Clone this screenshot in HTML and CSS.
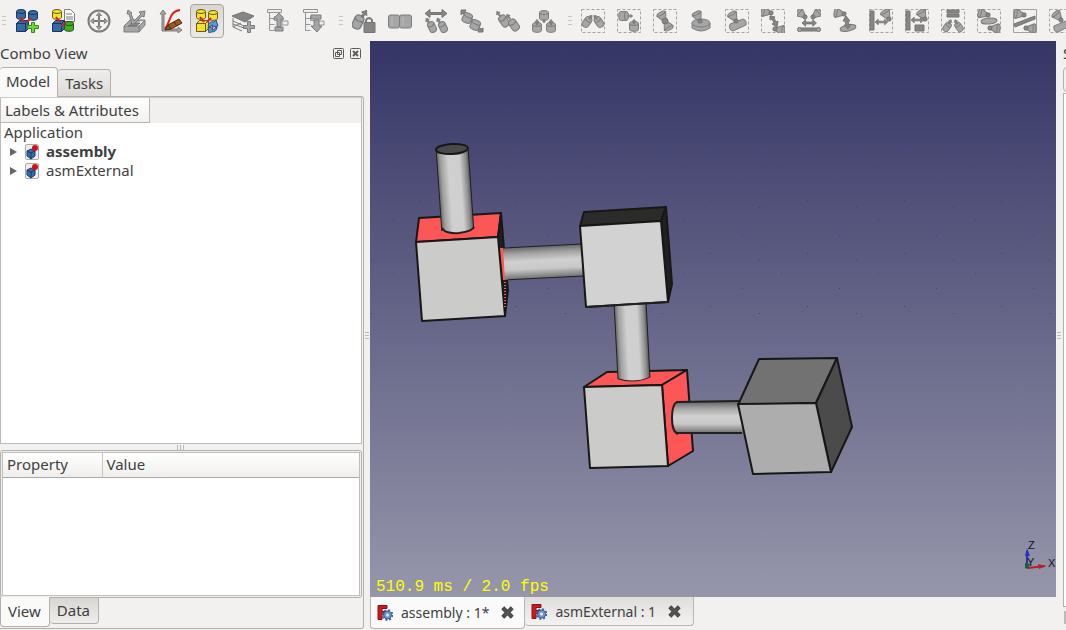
FILE: index.html
```html
<!DOCTYPE html>
<html lang="en">
<head>
<meta charset="utf-8">
<title>Assembly</title>
<link rel="stylesheet" href="styles.css">
</head>
<body>
<svg class="defs" aria-hidden="true">
  <defs>
    <g id="cyl"><path d="M.5 2.500v6c0 2.400 9 2.400 9 0v-6"/><ellipse cx="5" cy="2.500" rx="4.500" ry="2"/></g>
    <g id="cube"><path d="M.5 3.500h9v8h-9zM.5 3.500l3-3h9l-3 3zM9.500 3.500l3-3v8l-3 3z"/></g>
    <g id="cone"><path d="M-1 0L-5-8Q0-10 5-8L1 0z"/><ellipse cx="0" cy="-8.500" rx="4.500" ry="1.500"/><circle class="dark" r="2"/></g>
    <g id="up"><path class="dark" d="M-1 0v-4h-2l3-4 3 4h-2v4z"/></g>
    <g id="wide"><path class="dark" d="M0 0l4-3.500v2.500h8v-2.500l4 3.500-4 3.500v-2.500h-8v2.500z"/></g>
    <g id="pill"><rect x="-3.500" y="-5.500" width="7" height="11" rx="3"/><path d="M-3.500-2q3.500 2.500 7 0"/></g>
    <g id="dash"><rect class="dash" x=".5" y=".5" width="23" height="23"/></g>
    <g id="tree"><path class="pale" d="M.5.500h14v3h-14zM2.500 3.500v18h5M2.500 9.500h5M2.500 15.500h5M7.500 7.500h8v4h-8z"/></g>
    <linearGradient id="sky" x1="0" y1="0" x2="0" y2="1"><stop offset="0" stop-color="#353566"/><stop offset="1" stop-color="#9696ab"/></linearGradient>
    <linearGradient id="tubeV"><stop offset="0" stop-color="#666"/><stop offset=".12" stop-color="#a0a0a0"/><stop offset=".35" stop-color="#d0d0d0"/><stop offset=".7" stop-color="#cfcfcf"/><stop offset=".9" stop-color="#8c8c8c"/><stop offset="1" stop-color="#555"/></linearGradient>
    <linearGradient id="tubeH" x1="0" y1="0" x2="0" y2="1"><stop offset="0" stop-color="#666"/><stop offset=".2" stop-color="#a2a2a2"/><stop offset=".45" stop-color="#d0d0d0"/><stop offset=".7" stop-color="#c9c9c9"/><stop offset="1" stop-color="#707070"/></linearGradient>
    <pattern id="grain" width="97" height="53" patternUnits="userSpaceOnUse"><path fill="#3838b4" d="M5 8h1v1h-1zM63 23h1v1h-1zM31 41h1v1h-1zM80 48h1v1h-1z"/></pattern>
    <symbol id="doc" viewBox="0 0 16 16"><rect x="1.500" y=".5" width="13" height="15" rx="1.500" fill="#eee" stroke="#aaa"/><path d="M3 7l4-2 4 2v5l-4 3-4-3z" fill="#376ba8" stroke="#173c70"/><path d="M3 7l4 2 4-2M7 9v6" stroke="#17396a" fill="none"/><circle cx="11" cy="4" r="3" fill="#cc1212"/></symbol>
    <symbol id="logo" viewBox="0 0 16 16"><path d="M1 1h9v3h-5v3h4v3h-4v5h-4z" fill="#c91d1d" stroke="#8d1010"/><circle cx="10.500" cy="10.500" r="4" fill="#6c96cf" stroke="#345f9d"/><circle cx="10.500" cy="10.500" r="5" fill="none" stroke="#345f9d" stroke-width="1.500" stroke-dasharray="2 1.930"/><circle cx="10.500" cy="10.500" r="1.500" fill="#eee"/></symbol>
    <symbol id="close" viewBox="0 0 12 12"><path d="M1 3l2-2 3 3 3-3 2 2-3 3 3 3-2 2-3-3-3 3-2-2 3-3z" fill="#555" stroke="#444"/></symbol>
  </defs>
</svg>

<header class="toolbar">
  <span class="grip"></span>
  <button class="tool" aria-label="Add part"><svg class="ic" viewBox="0 0 24 24"><g class="blue"><use href="#cyl" x="1" y="0"/><use href="#cyl" x="13" y="1"/><use href="#cube" x="1" y="11"/></g><path class="red" d="M5 8l4 5M16 9l-4 4"/><path class="green" d="M16.500 13.500h3v3h4v3h-4v4h-3v-4h-4v-3h4z"/></svg></button>
  <button class="tool" aria-label="New assembly"><svg class="ic" viewBox="0 0 24 24"><g class="yellow"><use href="#cyl" x="1" y="0"/></g><path class="page" d="M13.500.500h6l4 4v8h-10z"/><path d="M15 5h6M15 8h7M15 10h7"/><g class="blue"><use href="#cube" x="1" y="11"/></g><g class="leaf"><use href="#cyl" x="13" y="12"/></g><path class="red" d="M5 8l4 5M15 14l-5 3"/></svg></button>
  <button class="tool" aria-label="Move part"><svg class="ic" viewBox="0 0 24 24"><circle cx="12" cy="12" r="10.500" fill="none" stroke-width="2"/><path d="M11.500 11.500v-5h-2l2.500-3 2.500 3h-2v5h5v-2l3 2.500-3 2.500v-2h-5v5h2l-2.500 3-2.500-3h2v-5h-5v2l-3-2.500 3-2.500v2z"/></svg></button>
  <button class="tool" aria-label="Move on plane"><svg class="ic" viewBox="0 0 24 24"><path d="M1 17l6-6h15v5l-6 7H1zM1 17h15l6-6M16 17v6"/><path class="dark" d="M5 17h8l4-3H9z"/><path d="M9 15L6 5H4l1-4 4 3-1 1 3 7 7-7-2-2 6-1-1 6-2-1-8 8z"/></svg></button>
  <button class="tool" aria-label="Trace"><svg class="ic" viewBox="0 0 24 24"><path d="M3 22V5H1l3-4 3 4H5v15h14v-2l4 3-4 3v-2z"/><path class="curve" d="M6 20C12 13 9 3 21 1"/><path class="brown" d="M6 21l3-5 11-6 3 4-11 6z"/><path class="brown" d="M9 16l3 4M15 13l3 4"/></svg></button>
  <button class="tool on" aria-label="Auto recompute"><svg class="ic" viewBox="0 0 24 24"><g class="yellow"><use href="#cyl" x="1" y="0"/><use href="#cyl" x="13" y="1"/><use href="#cube" x="1" y="11"/></g><path class="red" d="M5 8l4 5M16 9l-4 4"/><path class="sync" d="M13 17q1-5 6-4l2-2 2 6-6 1 1-2q-3 0-3 2zM22 18q0 5-6 5l-2 1-1-6 5 1-1 2q3 0 3-2z"/></svg></button>
  <button class="tool" aria-label="Add workplane"><svg class="ic" viewBox="0 0 24 24"><path class="dark" d="M1 7l11-4 11 4-9 6z"/><path class="line" d="M2 9v9l9 4M2 12l11 5M2 15l11 4M2 18l8-4"/><path d="M16.500 12.500h3v4h4v3h-4v4h-3v-4h-4v-3h4z"/></svg></button>
  <button class="tool" aria-label="Move item up"><svg class="ic" viewBox="0 0 24 24"><use href="#tree"/><path class="pale" d="M15 12h6v4h-6z"/><path d="M8 18h8v4H8zM10 18v-8H6l6-6 5 6h-3v8z"/></svg></button>
  <button class="tool" aria-label="Move item down"><svg class="ic" viewBox="0 0 24 24"><use href="#tree"/><path class="pale" d="M15 12h6v4h-6z"/><path d="M8 6h10v4H8zM11 11h5v6h3l-5 6-6-6h3z"/></svg></button>
  <span class="grip"></span>
  <button class="tool" aria-label="Lock"><svg class="ic" viewBox="0 0 24 24"><use href="#pill" transform="translate(6 13) rotate(25) scale(1.300)"/><use href="#up" transform="translate(10 8) rotate(35)"/><path class="line wide" d="M14 14v-3q3-4 6 0v3"/><rect class="dark" x="12" y="13.500" width="11" height="10"/></svg></button>
  <button class="tool" aria-label="Plane coincident"><svg class="ic" viewBox="0 0 24 24"><rect x=".5" y="6" width="11" height="13" rx="2"/><rect x="11.500" y="6" width="12" height="13" rx="2"/><path class="shine" d="M4 8v9M15 8v9"/></svg></button>
  <button class="tool" aria-label="Plane distance"><svg class="ic" viewBox="0 0 24 24"><path class="dark" d="M1 4.500l5-4v3h12v-3l5 4-5 4v-3H6v3z"/><use href="#pill" transform="translate(8 18) rotate(-25)"/><use href="#pill" transform="translate(19 18) rotate(-25)"/><use href="#up" transform="translate(5 14) rotate(-30) scale(.7)"/><use href="#up" transform="translate(16 14) rotate(-30) scale(.7)"/></svg></button>
  <button class="tool" aria-label="Axial alignment"><svg class="ic" viewBox="0 0 24 24"><path class="dark" d="M1 1h5L5 3l16 17 2-1v4h-5l1-2L3 4 1 6z"/><use href="#cyl" transform="translate(5 2) rotate(25)"/><use href="#cyl" transform="translate(13 9) rotate(25)"/></svg></button>
  <button class="tool" aria-label="Same orientation"><svg class="ic" viewBox="0 0 24 24"><use href="#pill" transform="translate(8 12) rotate(-35) scale(1.100)"/><use href="#pill" transform="translate(18 16) rotate(-35) scale(1.100)"/><use href="#up" transform="translate(4 7) rotate(-35) scale(.7)"/><use href="#up" transform="translate(14 10) rotate(-35) scale(.7)"/></svg></button>
  <button class="tool" aria-label="Multi parallel"><svg class="ic" viewBox="0 0 24 24"><use href="#cyl" x="7" y="1"/><use href="#cyl" x="0" y="13"/><use href="#cyl" x="14" y="13"/><use href="#up" transform="translate(5 16) scale(.7)"/><use href="#up" transform="translate(19 16) scale(.7)"/><use href="#up" transform="translate(12 10) rotate(180) scale(.5)"/></svg></button>
  <span class="grip"></span>
  <button class="tool" aria-label="Angle"><svg class="ic" viewBox="0 0 24 24"><use href="#dash"/><use href="#pill" transform="translate(6 13) rotate(35)"/><use href="#pill" transform="translate(18 13) rotate(-35)"/><use href="#up" transform="translate(8 10) rotate(40) scale(.6)"/><use href="#up" transform="translate(16 10) rotate(-40) scale(.6)"/></svg></button>
  <button class="tool" aria-label="Perpendicular"><svg class="ic" viewBox="0 0 24 24"><use href="#dash"/><use href="#cyl" transform="translate(12 2) rotate(90)"/><use href="#cyl" x="12" y="12"/><use href="#up" transform="translate(11 7) rotate(90) scale(.6)"/><use href="#up" transform="translate(17 15) scale(.6)"/></svg></button>
  <button class="tool" aria-label="Points coincident"><svg class="ic" viewBox="0 0 24 24"><use href="#dash"/><use href="#cone" transform="translate(12 12) rotate(-28)"/><use href="#cone" transform="translate(12 12) rotate(152)"/><circle class="dark" cx="12" cy="12" r="3"/></svg></button>
  <button class="tool" aria-label="Point in plane"><svg class="ic" viewBox="0 0 24 24"><path d="M3 14v5q9 6 18 0v-5"/><ellipse cx="12" cy="14" rx="9" ry="4"/><use href="#cone" transform="translate(11 12) rotate(-25)"/></svg></button>
  <button class="tool" aria-label="Point on line"><svg class="ic" viewBox="0 0 24 24"><use href="#dash"/><path d="M5 15l13-5q4 1 3 6l-13 6q-5-1-3-7z"/><use href="#cone" transform="translate(11 12) rotate(-30)"/></svg></button>
  <button class="tool" aria-label="Point distance"><svg class="ic" viewBox="0 0 24 24"><use href="#dash"/><use href="#cone" transform="translate(10 4) rotate(-80)"/><use href="#cone" transform="translate(14 20) rotate(100)"/><path class="dark" d="M9 7l5 1-1 1 2 4 2-1-1 6-5-3 2-1-2-4-2 1z"/></svg></button>
  <button class="tool" aria-label="Points distance"><svg class="ic" viewBox="0 0 24 24"><use href="#cone" transform="translate(8 8) rotate(-50)"/><use href="#cone" transform="translate(16 8) rotate(50)"/><use href="#wide" transform="translate(5 14) scale(.9)"/><path class="dark" d="M1 19h22v3H1z"/><circle cx="2.500" cy="20.500" r="2"/><circle cx="21.500" cy="20.500" r="2"/></svg></button>
  <button class="tool" aria-label="Point plane distance"><svg class="ic" viewBox="0 0 24 24"><use href="#cone" transform="translate(11 5) rotate(-80)"/><ellipse cx="15" cy="19" rx="8" ry="3" transform="rotate(-12 15 19)"/><path class="dark" d="M13 7l4 5h-2l1 4 2-1-3 5-4-4h2l-1-4h-2z"/></svg></button>
  <button class="tool" aria-label="Horizontal distance"><svg class="ic" viewBox="0 0 24 24"><use href="#dash"/><path class="dark" d="M1 2h4v19H1z"/><use href="#cone" transform="translate(20 10) rotate(-30)"/><use href="#wide" transform="translate(6 13) scale(.8)"/></svg></button>
  <button class="tool" aria-label="Vertical distance"><svg class="ic" viewBox="0 0 24 24"><use href="#dash"/><path class="dark" d="M1 2h4v19H1zM10 16h9v6h-9z"/><use href="#cone" transform="translate(20 10) rotate(-30)"/><use href="#wide" transform="translate(6 11) scale(.8)"/></svg></button>
  <button class="tool" aria-label="Symmetric"><svg class="ic" viewBox="0 0 24 24"><use href="#dash"/><path class="dark" d="M6 1h12v3H6zM6 5h12v3H6z"/><use href="#pill" transform="translate(6 18) rotate(35) scale(.9)"/><use href="#pill" transform="translate(18 18) rotate(-35) scale(.9)"/><use href="#up" transform="translate(8 15) rotate(25) scale(.6)"/><use href="#up" transform="translate(16 15) rotate(-25) scale(.6)"/></svg></button>
  <button class="tool" aria-label="Equal"><svg class="ic" viewBox="0 0 24 24"><use href="#dash"/><use href="#cone" transform="translate(11 6) rotate(-75)"/><ellipse cx="12" cy="12" rx="8" ry="3" transform="rotate(-5 12 12)"/><use href="#cone" transform="translate(13 19) rotate(95)"/></svg></button>
  <button class="tool" aria-label="Points symmetric"><svg class="ic" viewBox="0 0 24 24"><rect class="box" x=".5" y=".5" width="23" height="23"/><use href="#cone" transform="translate(11 6) rotate(-80)"/><use href="#cone" transform="translate(13 19) rotate(95)"/><path class="dark" d="M1 15l21-8v3L2 18z"/></svg></button>
  <button class="tool" aria-label="Tangent"><svg class="ic" viewBox="0 0 24 24"><use href="#dash"/><path d="M5 17l12-5 4 5-12 6q-5 0-4-6z"/><use href="#cone" transform="translate(12 11) rotate(-40)"/></svg></button>
</header>

<main class="work">
  <aside class="dock">
    <div class="dock-title"><h2>Combo View</h2>
      <button class="mini" aria-label="Float"><svg viewBox="0 0 11 11"><rect x=".5" y=".5" width="10" height="10" rx="1"/><path d="M4.500 2.500h4v4h-4zM2.500 4.500h4v4h-4z"/></svg></button>
      <button class="mini" aria-label="Close"><svg viewBox="0 0 11 11"><rect x=".5" y=".5" width="10" height="10" rx="1"/><path class="x" d="M3 3l5 5M8 3L3 8"/></svg></button>
    </div>
    <div class="tabs top"><button class="tab current">Model</button><button class="tab">Tasks</button></div>
    <div class="pane">
      <section class="model">
        <div class="tree-head"><span>Labels &amp; Attributes</span></div>
        <div class="root">Application</div>
        <ul class="nodes">
          <li><button class="node bold"><i class="twist"></i><svg><use href="#doc"/></svg>assembly</button></li>
          <li><button class="node"><i class="twist"></i><svg><use href="#doc"/></svg>asmExternal</button></li>
        </ul>
      </section>
      <div class="split"></div>
      <section class="props">
        <div class="grid"><table><thead><tr><th class="name">Property</th><th>Value</th></tr></thead></table></div>
      </section>
      <div class="tabs bottom"><button class="tab current">View</button><button class="tab">Data</button></div>
    </div>
  </aside>
  <div class="split side"></div>

  <section class="center">
    <div class="view">
      <svg class="scene" viewBox="370 41 686 556" preserveAspectRatio="none" role="img" aria-label="3D view">
        <rect x="370" y="41" width="686" height="556" fill="url(#sky)"/>
        <rect x="370" y="41" width="686" height="275" fill="url(#grain)"/>
        <g class="edge">
          <path class="hot" d="M419 218L501 213L498 237L416 242z"/>
          <path class="black" d="M501 213L504 249L508 290L505 316L498 237z"/>
          <path class="face" d="M416 242L498 237L505 316L422 321z"/>
          <g transform="rotate(-3 543 262)"><rect class="flat" x="503" y="246" width="80" height="32" fill="url(#tubeH)"/><path class="line" d="M503 246h80M507 278h76"/></g>
          <path class="flat hot" d="M500 248l3 0 2 32-2 0z"/><path class="hatch" d="M505 282v25"/>
          <g transform="rotate(-4 456 190)"><path class="flat" fill="url(#tubeV)" d="M439 149H471V230Q455 236 439 230z"/><path class="line" d="M439 151V230M471 151V230"/></g>
          <path class="line" d="M442 228Q445 234 459 233Q473 231 474 227"/>
          <ellipse cx="452" cy="149" rx="16" ry="5" fill="#494949" transform="rotate(-3 452 149)"/>
          <path class="dim" d="M584 212L666 207L661 221L580 226z"/>
          <path class="black" d="M666 207L672 284L668 302L661 221z"/>
          <path class="face light" d="M580 226L661 221L668 302L586 307z"/>

          <path class="hot" d="M607 372L687 370L662 385L584 387z"/>
          <path class="hot side" d="M687 370L693 451L668 466L662 385z"/>
          <path class="face" d="M584 387L662 385L668 466L590 468z"/>
          <g transform="rotate(-3 632 340)"><path class="flat" fill="url(#tubeV)" d="M616 305H648V378Q632 384 616 378z"/><path class="line" d="M616 305V378Q632 384 648 378V305"/></g>
          <path class="line" d="M586 307L668 302"/>
          <path class="flat" fill="url(#tubeH)" d="M677 402H740L746 433H677Q668 418 677 402z"/>
          <path class="line" d="M739 401L677 402Q672 404 672 418T678 434M677 433H742"/>
          <path fill="#727272" d="M759 359L837 358L816 403L738 405z"/>
          <path fill="#4b4b4b" d="M837 358L852 427L831 472L816 403z"/>
          <path fill="#adadad" d="M738 404L816 403L831 472L753 474z"/>
        </g>
        <g class="axis">
          <path d="M1028 568L1045 566" stroke="#b51f2a" stroke-width="2"/><path d="M1038 564l8 2-7 3z" fill="#b51f2a"/>
          <path d="M1027 565V553" stroke="#2733b5" stroke-width="2"/><path d="M1025 556l2-8 3 8z" fill="#2733b5"/>
          <path d="M1025 568v-5l5 1-2 5z" fill="#17633a"/>
          <text x="1028" y="549">Z</text><text x="1027" y="566">Y</text><text x="1048" y="567">X</text>
        </g>
      </svg>
      <output class="fps">510.9 ms / 2.0 fps</output>
    </div>
    <nav class="docs">
      <div class="docTab current"><button class="label"><svg><use href="#logo"/></svg>assembly : 1*</button><button class="shut" aria-label="Close assembly"><svg><use href="#close"/></svg></button></div>
      <div class="docTab"><button class="label"><svg><use href="#logo"/></svg>asmExternal : 1</button><button class="shut" aria-label="Close asmExternal"><svg><use href="#close"/></svg></button></div>
    </nav>
  </section>
  <div class="split side"></div>
  <aside class="edgeDock"><h2>S</h2><i class="stub"></i><div class="sliver"></div><i class="foot"></i></aside>
</main>
</body>
</html>
```
FILE: styles.css
```css
* { box-sizing: border-box; }
body {
  margin: 0;
  height: 100vh;
  display: flex;
  flex-direction: column;
  overflow: hidden;
  background: #f2f1ef;
  color: #3f3f3f;
  font: 15px/19px "Noto Sans", "Open Sans", sans-serif;
}
button { font: inherit; color: inherit; background: none; border: 0; padding: 0; margin: 0; }
h2 { font: inherit; margin: 0; }
.defs { position: absolute; width: 0; height: 0; }

.toolbar { display: flex; flex: none; align-items: center; gap: 2px; height: 41px; overflow: hidden; }
.grip { flex: none; width: 11px; height: 10px; background: repeating-linear-gradient(#c8c7c4 0 1px, transparent 1px 4px) content-box; padding: 0 2px 0 5px; }
.grip:first-child { width: 8px; padding: 0 2px; }
.tool { flex: none; display: flex; align-items: center; justify-content: center; width: 34px; height: 34px; border: 1px solid transparent; border-radius: 4px; }
.tool.on { border-color: #a9a49e; background: linear-gradient(#d9d6d3, #eceae8); }
.ic { width: 24px; height: 24px; overflow: hidden; fill: #a6a6a6; stroke: #7c7c7c; stroke-width: 1; stroke-linejoin: round; }
.dark { fill: #868686; stroke: #747474; }
.pale { fill: #ededed; stroke: #969696; }
.line { fill: none; }
.wide { stroke-width: 2; }
.dash, .box { fill: none; stroke: #a3a3a3; }
.dash { stroke-dasharray: 3 2; }
.shine { stroke: #bdbdbd; }
.blue { fill: #3569a8; stroke: #18355f; }
.yellow { fill: #f5e02c; stroke: #665d13; }
.leaf { fill: #43ad22; stroke: #1f5610; }
.green { fill: #72d63b; stroke: #328817; }
.page { fill: #fafafa; }
.red { stroke: #d51f1f; stroke-width: 2; fill: none; }
.curve { stroke: #dc1e1e; stroke-width: 2; fill: none; }
.brown { fill: #9a5a20; stroke: #4e270c; }
.sync { fill: #6596d4; stroke: #275087; }

.work { display: flex; flex: 1; min-height: 0; }
.dock { display: flex; flex-direction: column; flex: 0 0 364px; padding-bottom: 1px; }
.dock-title { display: flex; align-items: center; gap: 6px; height: 25px; padding-right: 3px; }
.dock-title h2 { flex: 1; }
.mini { display: flex; }
.mini svg { width: 11px; height: 11px; fill: none; stroke: #5b5b5b; }
.mini .x { stroke-width: 2; }
.tabs { display: flex; position: relative; }
.tab { border: 1px solid #b3b0ac; background: linear-gradient(#efeeec, #dcdad7); }
.top { height: 30px; align-items: flex-end; }
.top .tab { height: 27px; padding: 0 7px; border-bottom: 0; border-radius: 4px 4px 0 0; }
.top .tab.current { height: 30px; padding: 0 7px 2px 6px; margin-bottom: -1px; border-left: 0; background: #f9f9f8; }
.top .tab:not(.current) { border-left: 0; }
.pane { display: flex; flex-direction: column; flex: 1; min-height: 0; border: 1px solid #b3b0ac; border-left: 0; border-radius: 0 3px 3px 0; }
.model { flex: 1; min-height: 0; margin-right: 1px; border: 1px solid #bdbab7; border-top-color: #cfcdca; background: #fff; }
.tree-head { display: flex; height: 25px; background: #f1f0ef; }
.tree-head span { width: 149px; padding: 3px 4px; border: solid #b9b6b2; border-width: 0 1px 1px 0; background: linear-gradient(#fff, #f2f1ef); }
.root { padding-left: 3px; }
.nodes { margin: 0; padding: 0; list-style: none; }
.node { display: flex; align-items: center; height: 19px; padding-left: 9px; }
.node svg { width: 16px; height: 16px; margin: 0 6px 0 7px; }
.bold { font-weight: bold; }
.twist { border: solid transparent; border-width: 4px 0 4px 7px; border-left-color: #666; }
.split { flex: none; height: 6px; display: flex; align-items: center; justify-content: center; }
.split::after { content: ""; width: 9px; height: 5px; background: repeating-linear-gradient(90deg, #bbb 0 1px, transparent 1px 3px); }
.split.side { width: 6px; height: auto; }
.split.side::after { width: 4px; height: 8px; background: repeating-linear-gradient(#bbb 0 1px, transparent 1px 3px); }
.props { height: 148px; flex: none; margin-right: 1px; padding: 1px; border: 1px solid #b3b0ac; border-radius: 3px; }
.grid { height: 100%; border: 1px solid #c0bdba; background: #fff; }
table { width: 100%; border-collapse: collapse; }
th { height: 24px; padding: 0 4px; text-align: left; font-weight: normal; border-bottom: 1px solid #aba8a5; background: linear-gradient(#fff, #efeeec); }
th.name { width: 99px; border-right: 1px solid #c8c5c2; }
.bottom { height: 31px; align-items: flex-start; margin-top: -1px; }
.bottom .tab { height: 27px; padding: 0 8px 0 7px; border-radius: 0 0 4px 4px; }
.bottom .tab.current { height: 30px; border-top: 0; background: #fafaf9; }
.bottom .tab:not(.current) { border-left: 0; background: linear-gradient(#d8d6d3, #efeeec); }

.center { display: flex; flex-direction: column; flex: 1; min-width: 0; }
.view { position: relative; flex: 1; min-height: 0; }
.scene { display: block; width: 100%; height: 100%; }
.edge > path, .edge ellipse { stroke: #171717; stroke-width: 2; stroke-linejoin: round; }
.edge > .flat, .edge .flat { stroke: none; }
.edge .line { fill: none; stroke: #202020; stroke-width: 2; }
.edge g .line { stroke-width: 1; }
.hot { fill: #fd5656; }
.face { fill: #cbccca; }
.light { fill: #d2d2d2; }
.dim { fill: #2b2b2a; }
.black { fill: #202020; }
.edge > .hatch { stroke: #fd5656; stroke-dasharray: 1 2; }
.axis text { font: 11px "Liberation Sans", sans-serif; fill: #111; }
.fps { position: absolute; left: 6px; bottom: 1px; color: #ff0; font: 16px/18px "Liberation Mono", monospace; }
.docs { display: flex; align-items: flex-start; height: 33px; font-size: 14px; }
.docTab { display: flex; align-items: center; gap: 12px; height: 29px; padding: 0 12px 0 6px; border: 1px solid #b9b6b2; border-top: 0; border-left-width: 0; border-radius: 0 0 4px 4px; background: linear-gradient(#e0deda, #f3f2f1); }
.docTab.current { height: 32px; padding-right: 10px; border-left-width: 1px; background: #f9faf9; }
.label { display: flex; align-items: center; gap: 8px; white-space: nowrap; }
.label svg { width: 16px; height: 17px; }
.shut { display: flex; }
.shut svg { width: 13px; height: 13px; }

.edgeDock { display: flex; flex-direction: column; flex: 0 0 4px; overflow: hidden; padding-left: 1px; }
.edgeDock h2 { height: 26px; padding-top: 3px; }
.stub { width: 20px; height: 25px; border: 1px solid #b3b0ac; border-radius: 4px; }
.sliver { flex: 1; width: 20px; margin-top: 1px; border: 1px solid #b3b0ac; background: #fff; }
.foot { width: 20px; height: 13px; margin: 4px 0 6px 1px; background: #bbb; }
```
